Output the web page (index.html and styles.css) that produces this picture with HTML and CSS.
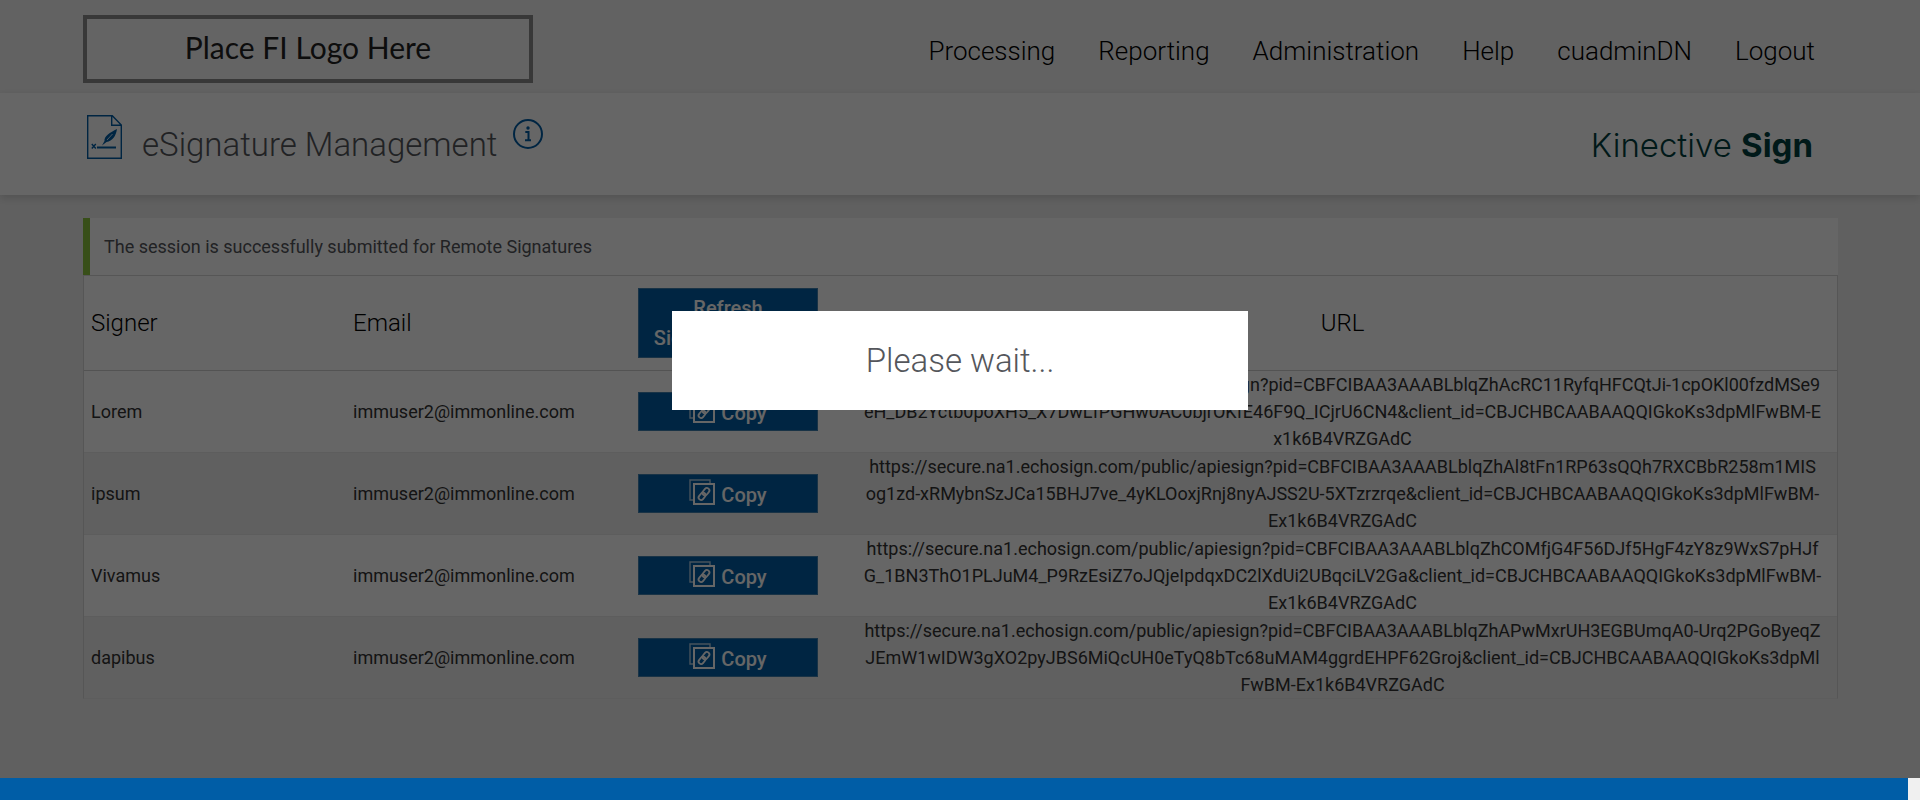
FILE: index.html
```html
<!DOCTYPE html>
<html lang="en">
<head>
  <meta charset="UTF-8">
  <title>eSignature Management</title>
  <link rel="stylesheet" href="styles.css">
</head>
<body>

  <svg class="defs" aria-hidden="true">
    <symbol id="copy-icon" viewBox="0 0 26 26">
      <path d="M4 21H1V1h20v3" fill="none" stroke="currentColor" stroke-width="1.4" opacity=".7"/>
      <rect x="5" y="5" width="20" height="20" fill="none" stroke="currentColor" stroke-width="2"/>
      <g fill="none" stroke="currentColor" stroke-width="1.8" transform="rotate(-50 15 15)">
        <rect x="8" y="12.5" width="8" height="5" rx="2.5"/>
        <rect x="14" y="12.5" width="8" height="5" rx="2.5"/>
      </g>
    </symbol>
  </svg>

  <div class="page">
    <header class="topbar">
      <div class="fi-logo">Place FI Logo Here</div>
      <nav class="menu">
        <a href="#">Processing</a>
        <a href="#">Reporting</a>
        <a href="#">Administration</a>
        <a href="#">Help</a>
        <a href="#">cuadminDN</a>
        <a href="#">Logout</a>
      </nav>
    </header>

    <div class="titlebar">
      <svg class="doc-icon" viewBox="0 0 35 44" aria-hidden="true">
        <path d="M.7.7h24.6l9 9.4v33.2H.7zM24.7.7v9.6h9.6" fill="none" stroke="currentColor" stroke-width="1.4"/>
        <path d="M15 30.500l2.500-4.500C17 21 23 17.500 30 14c-1 7-4.500 12-10.500 13z" fill="currentColor"/>
        <path d="M20 25l5.500-6" stroke="#fff" stroke-width=".8"/>
        <path d="M10 32.500h19" stroke="currentColor" stroke-width="2"/>
        <path d="M4.800 29l4 4.500M8.800 29l-4 4.500" stroke="currentColor" stroke-width="1.400"/>
      </svg>
      <h1>eSignature Management</h1>
      <svg class="info-icon" viewBox="0 0 30 30" aria-hidden="true">
        <circle cx="15" cy="15" r="14" fill="none" stroke="currentColor" stroke-width="2"/>
        <circle cx="15" cy="9" r="1.700" fill="currentColor"/>
        <path d="M12.300 13h3.200v8M12 21.300h6" fill="none" stroke="currentColor" stroke-width="2"/>
      </svg>
      <div class="brand">Kinective <b>Sign</b></div>
    </div>

    <main>
      <div class="message">The session is successfully submitted for Remote Signatures</div>
      <table class="signers">
        <colgroup>
          <col class="col-signer">
          <col class="col-email">
          <col class="col-action">
          <col>
        </colgroup>
        <thead>
          <tr>
            <th>Signer</th>
            <th>Email</th>
            <th><button type="button">Refresh<br>Signature Status</button></th>
            <th class="url">URL</th>
          </tr>
        </thead>
        <tbody>
          <tr>
            <td>Lorem</td>
            <td>immuser2@immonline.com</td>
            <td><button type="button"><svg class="copy"><use href="#copy-icon"/></svg>Copy</button></td>
            <td class="url">https://secure.na1.echosign.com/public/apiesign?pid=CBFCIBAA3AAABLblqZhAcRC11RyfqHFCQtJi-1cpOKl00fzdMSe9<br>eH_DB2Yctb0poXH5_X7DwLfPGHw0AC0bjrOKfE46F9Q_ICjrU6CN4&amp;client_id=CBJCHBCAABAAQQIGkoKs3dpMlFwBM-E<br>x1k6B4VRZGAdC</td>
          </tr>
          <tr>
            <td>ipsum</td>
            <td>immuser2@immonline.com</td>
            <td><button type="button"><svg class="copy"><use href="#copy-icon"/></svg>Copy</button></td>
            <td class="url">https://secure.na1.echosign.com/public/apiesign?pid=CBFCIBAA3AAABLblqZhAl8tFn1RP63sQQh7RXCBbR258m1MIS<br>og1zd-xRMybnSzJCa15BHJ7ve_4yKLOoxjRnj8nyAJSS2U-5XTzrzrqe&amp;client_id=CBJCHBCAABAAQQIGkoKs3dpMlFwBM-<br>Ex1k6B4VRZGAdC</td>
          </tr>
          <tr>
            <td>Vivamus</td>
            <td>immuser2@immonline.com</td>
            <td><button type="button"><svg class="copy"><use href="#copy-icon"/></svg>Copy</button></td>
            <td class="url">https://secure.na1.echosign.com/public/apiesign?pid=CBFCIBAA3AAABLblqZhCOMfjG4F56DJf5HgF4zY8z9WxS7pHJf<br>G_1BN3ThO1PLJuM4_P9RzEsiZ7oJQjeIpdqxDC2lXdUi2UBqciLV2Ga&amp;client_id=CBJCHBCAABAAQQIGkoKs3dpMlFwBM-<br>Ex1k6B4VRZGAdC</td>
          </tr>
          <tr>
            <td>dapibus</td>
            <td>immuser2@immonline.com</td>
            <td><button type="button"><svg class="copy"><use href="#copy-icon"/></svg>Copy</button></td>
            <td class="url">https://secure.na1.echosign.com/public/apiesign?pid=CBFCIBAA3AAABLblqZhAPwMxrUH3EGBUmqA0-Urq2PGoByeqZ<br>JEmW1wIDW3gXO2pyJBS6MiQcUH0eTyQ8bTc68uMAM4ggrdEHPF62Groj&amp;client_id=CBJCHBCAABAAQQIGkoKs3dpMl<br>FwBM-Ex1k6B4VRZGAdC</td>
          </tr>
        </tbody>
      </table>
    </main>

    <div class="overlay"></div>
    <div class="wait" role="dialog">Please wait...</div>
  </div>

  <footer></footer>

</body>
</html>
```

FILE: styles.css
```css
* {
  box-sizing: border-box;
}
body {
  margin: 0;
  min-height: 100vh;
  display: flex;
  flex-direction: column;
  background: #f0f0f0;
  color: #333;
  font-family: Roboto, sans-serif;
  font-size: 18px;
  line-height: 27px;
}
.defs {
  display: none;
}
.page {
  position: relative;
  flex: 1;
}

/* header */
.topbar {
  display: flex;
  justify-content: space-between;
  height: 93px;
  padding: 15px 105px 0 83px;
  background: #f5f5f5;
}
.fi-logo {
  width: 450px;
  height: 68px;
  border: 4px solid #8c8c8c;
  background: #fafafa;
  color: #222;
  font-family: Lato, sans-serif;
  font-size: 30px;
  line-height: 56px;
  text-align: center;
}
.menu {
  display: flex;
  gap: 43px;
  padding-top: 16px;
  font-size: 26px;
  font-weight: 300;
  line-height: 40px;
}
.menu a {
  color: #000;
  text-decoration: none;
}
.titlebar {
  position: relative;
  display: flex;
  align-items: flex-start;
  height: 102px;
  padding: 22px 107px 0 87px;
  background: #fff;
  box-shadow: 0 3px 8px rgba(0, 0, 0, .15);
}
.doc-icon {
  width: 35px;
  height: 44px;
  color: #005da6;
}
.titlebar h1 {
  margin: 8px 16px 0 20px;
  color: #54565b;
  font-size: 33px;
  font-weight: 300;
  line-height: 44px;
}
.info-icon {
  width: 30px;
  height: 30px;
  margin-top: 4px;
  color: #005da6;
}
.brand {
  margin: 8px 0 0 auto;
  color: #003f40;
  font-family: Inter, sans-serif;
  font-size: 33px;
  font-weight: 300;
  line-height: 44px;
}
.brand b {
  font-weight: 700;
}

/* signer list */
main {
  padding: 23px 82px 79px 83px;
}
.message {
  padding: 15px 14px;
  border-left: 7px solid #8dc63f;
  background: #fff;
  color: #54565b;
}
.signers {
  width: 100%;
  table-layout: fixed;
  border: 1px solid #d8d8d8;
  border-bottom-color: #e8e8e8;
  border-spacing: 0;
}
.col-signer {
  width: 262px;
}
.col-email {
  width: 285px;
}
.col-action {
  width: 217px;
}
.signers th {
  height: 95px;
  padding: 0 7px;
  border-bottom: 1px solid #d0d0d0;
  background: #fff;
  color: #000;
  font-size: 24px;
  font-weight: 300;
  text-align: left;
}
.signers td {
  padding: 0 7px;
  border-bottom: 1px solid #e8e8e8;
}
.signers tbody tr:nth-child(odd) {
  background: #fff;
}
.signers tbody tr:last-child td {
  border-bottom: 0;
}
.signers .url {
  text-align: center;
  word-break: break-all;
}
.signers button {
  width: 180px;
  padding: 4px 6px;
  border: 1px solid #3f7fb0;
  background: #005da6;
  color: #fff;
  font-family: inherit;
  font-size: 20px;
  font-weight: 500;
  line-height: 30px;
}
.signers th button {
  display: block;
}
.signers td button {
  display: flex;
  align-items: flex-start;
  justify-content: center;
  gap: 6px;
  padding-bottom: 1px;
  line-height: 32px;
}
.copy {
  width: 26px;
  height: 26px;
}

/* wait dialog */
.overlay {
  position: absolute;
  inset: 0;
  background: rgba(0, 0, 0, .6);
}
.wait {
  position: absolute;
  top: 311px;
  left: 35%;
  width: 30%;
  padding: 28px 0 27px;
  background: #fff;
  color: #54565b;
  font-size: 33px;
  font-weight: 300;
  line-height: 44px;
  text-align: center;
}

footer {
  height: 22px;
  margin-right: 12px;
  background: #005da6;
}
```
